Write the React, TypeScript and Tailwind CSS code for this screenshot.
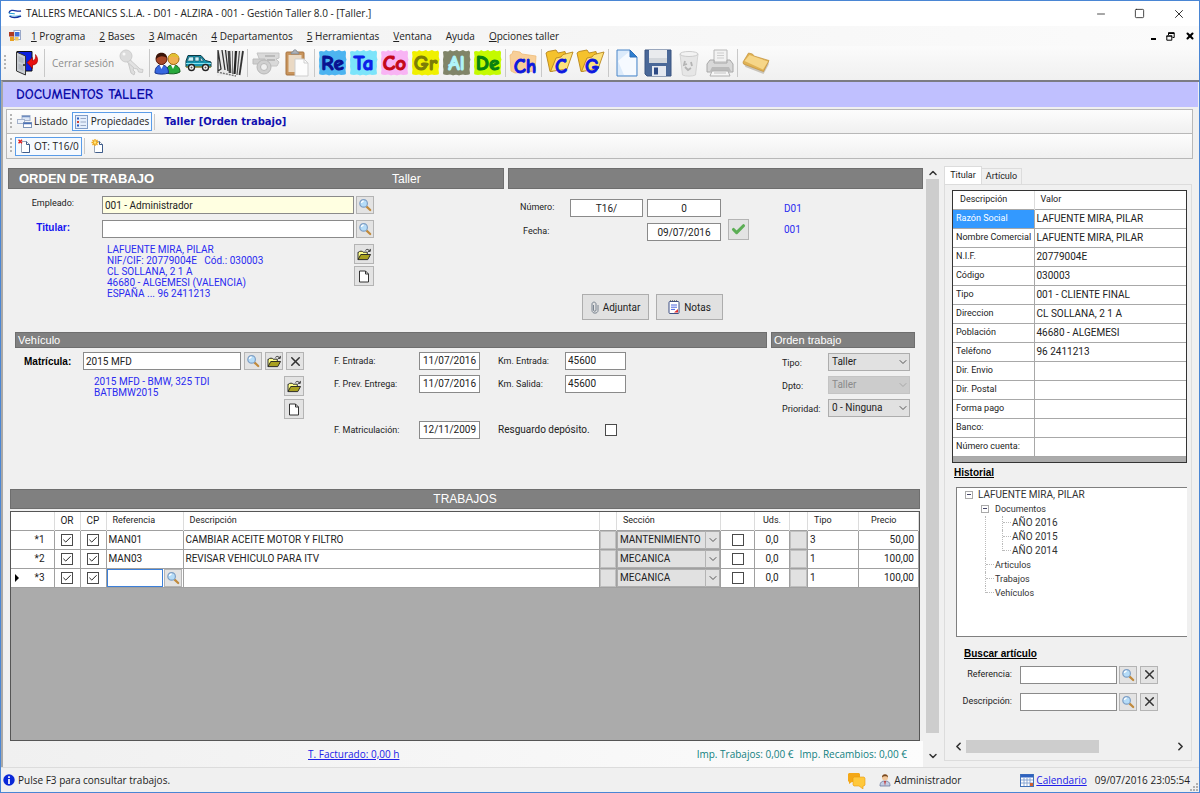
import type { ReactNode } from "react";
import { Check, ChevronDown, ChevronLeft, ChevronRight, ChevronUp, Minus, Square, X } from "lucide-react";

/* ---------- icons ---------- */

const Svg = ({ w, h, box, children }: { w: number; h: number; box: string; children: ReactNode }) => (
  <svg width={w} height={h} viewBox={box} fill="none" aria-hidden="true" className="shrink-0">
    {children}
  </svg>
);

const SearchIcon = () => (
  <Svg w={14} h={14} box="0 0 14 14">
    <path d="M8.6 8.6l3.6 3.4" stroke="#c08a3c" strokeWidth="2.2" strokeLinecap="round" />
    <circle cx="5.6" cy="5.4" r="3.8" fill="#b5dcf8" stroke="#7f9fc4" strokeWidth="1.2" />
    <path d="M3.4 5a2.4 2.4 0 012.2-2" stroke="#fff" strokeWidth="1.3" />
  </Svg>
);

const OpenIcon = () => (
  <Svg w={15} h={13} box="0 0 16 14">
    <path d="M1 12.5V4.5h1l1-1h2.5l1 1H11v2" fill="#ffff8a" stroke="#222" />
    <path d="M1 12.5l3-5.5h10.5l-3 5.500z" fill="#a8a020" stroke="#222" />
    <path d="M9 2.600c1.500-1.600 3.300-1.400 4.500.6M14.200 1v2.600h-2.500" stroke="#222" />
  </Svg>
);

const PageIcon = () => (
  <Svg w={12} h={13} box="0 0 12 13">
    <path d="M1.500 1h6l3 3v8h-9z" fill="#fff" stroke="#333" />
    <path d="M7.500 1v3h3" stroke="#333" />
  </Svg>
);

const AppIcon = () => (
  <Svg w={14} h={12} box="0 0 14 12">
    <path d="M1 4.800C1.500 2 5 2 8 2.800c2 .5 3.500.5 5 .2" stroke="#1432a0" strokeWidth="1.300" />
    <path d="M.8 5.200l6 .6" stroke="#1a9ad0" strokeWidth="1" />
    <path d="M1.500 8c2.500 2 7 1.800 11.500 0" stroke="#1432a0" strokeWidth="1.600" />
    <path d="M1.500 7.300C5 8.600 10 8 12.500 7" stroke="#5fc0e8" strokeWidth=".8" />
  </Svg>
);

const FormIcon = () => (
  <Svg w={12} h={12} box="0 0 12 12">
    <rect x="5" y=".5" width="6.500" height="9" fill="#fff" stroke="#9aa8c8" />
    <rect x="0" y="2" width="5" height="4.500" fill="#b03a20" />
    <rect x="6" y="2" width="4.500" height="4.500" fill="#3f6fd8" />
    <rect x="1" y="7" width="4" height="4" fill="#e8a020" />
    <rect x="6" y="7" width="3.500" height="3.500" fill="#f0c860" />
  </Svg>
);

const DoorIcon = () => (
  <Svg w={24} h={26} box="0 0 24 26">
    <path d="M2 1.500h15v19.500H3z" fill="#0a20e0" stroke="#111" />
    <path d="M1.500 2l9 4V25l-9-4z" fill="#c9cdd2" stroke="#333" />
    <path d="M3.500 6l5 2v5.500l-5-2zM3.500 13.500l5 2v5.500l-5-2z" fill="#b3b8bf" />
    <circle cx="9" cy="15" r="1" fill="#222" />
    <path d="M12 12.500l5.500-5v3c2.500 0 3.500-2.500 3-6 4 5 2 10.500-3 10.500v3.500z" fill="#e81010" stroke="#900" strokeWidth=".6" />
  </Svg>
);

const KeyIcon = () => (
  <Svg w={26} h={28} box="0 0 26 28">
    <path d="M9 9l4 15 3 2 1-3-2-2 1-2-2-2-2-9z" fill="#dedede" stroke="#c9c9c9" />
    <path d="M9 8l13 12 3 .5-.5 3-4-.5-1-3-3-.5-10-9z" fill="#e2e2e2" stroke="#cacaca" />
    <circle cx="8" cy="7" r="6" fill="#dcdcdc" stroke="#cdcdcd" />
    <circle cx="6" cy="5" r="1.500" fill="#f8f8f8" />
  </Svg>
);

const PeopleIcon = () => (
  <Svg w={27} h={24} box="0 0 27 24">
    <path d="M12 22c0-6 3-8 7-8s7 2 7 7c-3 2-9 2.500-14 1z" fill="#27a83b" stroke="#14601f" />
    <path d="M17 14l2 4 2-4z" fill="#fff" />
    <circle cx="19.500" cy="8" r="5.500" fill="#f0b050" stroke="#a06a14" />
    <path d="M14.500 7c0-5 10-6 10.500 0-3-1-7-3-10.500 0z" fill="#e0c030" />
    <path d="M1 22c0-6 3-8 6.500-8s7 2 7 8c-4 1.500-10 1.500-13.500 0z" fill="#3767e0" stroke="#163390" />
    <path d="M5.500 14l2 4 2-4z" fill="#fff" />
    <circle cx="7.500" cy="8" r="5.500" fill="#a8492a" stroke="#5a1c0c" />
    <path d="M2 8c-1-8 11-8 11-1-3-2-7-3-11 1z" fill="#3a1408" />
  </Svg>
);

const CarIcon = () => (
  <Svg w={27} h={18} box="0 0 27 18">
    <path d="M1 13V7l2-5.500h13L20.500 6.500l5.500 1.500v5z" fill="#1594b0" stroke="#0c3844" />
    <path d="M4 3h4.500v4H2.500zM10 3h4v4h-4zM15.500 3l3 4h-3z" fill="#c8f0f8" stroke="#0c3844" strokeWidth=".5" />
    <path d="M1 9.500h25" stroke="#8ae4f0" />
    <path d="M1 13h25" stroke="#c0a020" />
    <circle cx="6.500" cy="13.500" r="3" fill="#fff" stroke="#222" strokeWidth="1.400" />
    <circle cx="6.500" cy="13.500" r="1" fill="#555" />
    <circle cx="20.500" cy="13.500" r="3" fill="#fff" stroke="#222" strokeWidth="1.400" />
    <circle cx="20.500" cy="13.500" r="1" fill="#555" />
  </Svg>
);

const BarcodeIcon = () => (
  <Svg w={28} h={28} box="0 0 28 28">
    <path d="M2 1l26 1-3 22L1 27z" fill="#e9e9e9" />
    <path d="M2 1l3 19-3 2zM6 1l3 20M9.500 1l2.500 21" stroke="#333" strokeWidth="1.300" />
    <path d="M13 2l1 22" stroke="#444" strokeWidth="2.600" />
    <path d="M16.500 2v23" stroke="#777" />
    <path d="M20 2l-1.500 23" stroke="#222" strokeWidth="2.200" />
    <path d="M23.500 2L21 26" stroke="#555" strokeWidth="1.200" />
    <path d="M27 2l-3.500 24" stroke="#333" strokeWidth="1.800" />
    <path d="M1 23l19 4" stroke="#777" strokeWidth="1.400" strokeDasharray="2 1" />
  </Svg>
);

const EngineIcon = () => (
  <Svg w={28} h={26} box="0 0 28 26">
    <path d="M5 3h22v5l-3 1 3 3-2 4H10z" fill="#d9d9d9" stroke="#c4c4c4" />
    <path d="M1 9h12v5H1z" fill="#cfcfcf" stroke="#bcbcbc" />
    <path d="M13 6h10M15 10h8" stroke="#b0b0b0" strokeWidth="1.500" />
    <circle cx="12" cy="17" r="7" fill="#d0d0d0" stroke="#b8b8b8" />
    <circle cx="12" cy="17" r="3.500" fill="#efefef" stroke="#b8b8b8" />
  </Svg>
);

const ClipboardIcon = () => (
  <Svg w={24} h={28} box="0 0 24 28">
    <rect x="1" y="3" width="18" height="23" rx="1" fill="#c8945c" stroke="#a87440" />
    <rect x="3.500" y="6" width="13" height="17" fill="#ead9c4" />
    <path d="M6 5c0-2 1-2 2-2 0-3 4-3 4 0 1 0 2 0 2 2z" fill="#aab0b8" stroke="#7c828a" strokeWidth=".7" />
    <path d="M10 10h9l4 4v13H10z" fill="#fdfdfd" stroke="#cfcfcf" />
    <path d="M19 10v4h4" stroke="#cfcfcf" />
  </Svg>
);

const Badge = ({ text, bg, fg }: { text: string; bg: string; fg: string }) => (
  <Svg w={29} h={28} box="0 0 29 28">
    <path d="M1.500 2.500h26v23h-26z" fill={bg} />
    <path
      d="M1 3l2-1 3 1 2-2 3 1.500 4-1.500 2 1.500 4-1.500 3 1.500 3-1 1 2-.5 4 1 3-1 3 .5 4-1 3 1 4-2 1-3 .5-2-1-4 1.500-3-1-3 1-3-1.500-3 1-2-.5-2-1 1-4-1-3 .5-3-.5-4 1-3z"
      fill={bg}
    />
    <text x="14.500" y="21" textAnchor="middle" fill={fg} stroke={fg} strokeWidth="1.100" className="text-[21px] font-bold [font-family:'Comic_Neue','Comic_Sans_MS',cursive]">
      {text}
    </text>
  </Svg>
);

const FolderLetter = ({ text, soft }: { text: string; soft?: boolean }) => (
  <Svg w={29} h={28} box="0 0 29 28">
    {soft ? (
      <path d="M1 6l2-1 1-3 7 1 2 2 14 2-1 15-20 2-4-2z" fill="#f8cf98" stroke="#eebb78" strokeWidth=".8" />
    ) : (
      <>
        <path d="M1 4l2-1.500L11 1l2 3 7-1.500 1 4L8 22l-3 .5z" fill="#f5c22c" stroke="#b8861c" strokeWidth=".9" />
        <path d="M5.500 22.500L11 9l5-1 2-2.500L28 3l-6 17z" fill="#fde27c" stroke="#b8861c" strokeWidth=".9" />
      </>
    )}
    <text x="16" y="24" textAnchor="middle" fill="#0c18e0" stroke="#0c18e0" strokeWidth=".9" className="text-[20px] font-bold [font-family:'Comic_Neue','Comic_Sans_MS',cursive]">
      {text}
    </text>
  </Svg>
);

const NewIcon = () => (
  <Svg w={22} h={28} box="0 0 22 28">
    <path d="M1 1h13l7 7v19H1z" fill="#dcebfb" stroke="#4a86c8" />
    <path d="M2 12L14 2v6h6v18H8z" fill="#f6faff" />
    <path d="M14 1v7h7z" fill="#2f7fd0" stroke="#2f6fb8" />
  </Svg>
);

const SaveIcon = () => (
  <Svg w={28} h={28} box="0 0 28 28">
    <path d="M1 1h26v26H3l-2-2z" fill="#4a6898" stroke="#3a5580" />
    <path d="M5 1h18v13H5z" fill="#e9ebee" />
    <path d="M5 9h18v5H5z" fill="#d3d7dc" />
    <path d="M8 17h14v10H8z" fill="#e4e8f0" />
    <path d="M10 18.500h4v7h-4z" fill="#2d4a84" />
  </Svg>
);

const TrashIcon = () => (
  <Svg w={20} h={27} box="0 0 20 27">
    <path d="M1 4l2.500 21c3 1.500 10 1.500 13 0L19 4z" fill="#e6e6e6" stroke="#d4d4d4" />
    <ellipse cx="10" cy="4" rx="9" ry="2.500" fill="#f3f3f3" stroke="#cccccc" />
    <path d="M6 11l-1 4 3-1M6 17l3 3 3-2M12 12l1 4" stroke="#b4b4b4" strokeWidth="1.800" />
  </Svg>
);

const PrinterIcon = () => (
  <Svg w={28} h={28} box="0 0 28 28">
    <path d="M8 1h13v12H8z" fill="#f2f2f2" stroke="#b8b8b8" />
    <path d="M11 4h7M11 6.500h7M11 9h7" stroke="#cecece" />
    <path d="M4 11h4v3h13v-3h3l3 4v8H1v-8z" fill="#d8d8d8" stroke="#a8a8a8" />
    <path d="M6 18h17l2 4H4z" fill="#bababa" />
    <path d="M6 22h16l2 5H4z" fill="#f6f6f6" stroke="#b0b0b0" />
    <path d="M8 24h12" stroke="#c4c4c4" />
  </Svg>
);

const FolderIcon = () => (
  <Svg w={28} h={24} box="0 0 28 24">
    <path d="M1.500 12l2 4 18 7 5-9 .5-4z" fill="#c9c4ba" />
    <path d="M1 11l5.500-9 4 1 1.500 2 15 4.500-5.500 11L1.500 13z" fill="#e0b254" stroke="#c4923a" strokeWidth=".7" />
    <path d="M2.500 10l5-6 18.500 6.500-5 8z" fill="#f6d688" />
  </Svg>
);

const ListIcon = () => (
  <Svg w={15} h={13} box="0 0 15 13">
    <rect x="5" y=".5" width="8" height="5" fill="#dce6f6" stroke="#a4b2cc" />
    <path d="M5 1.500h8" stroke="#6f8cc0" strokeWidth="1.500" />
    <rect x=".5" y="4.500" width="7" height="4" fill="#eef3fb" stroke="#a4b2cc" />
    <rect x="6.500" y="7.500" width="8" height="5" fill="#fff" stroke="#7f95b8" />
    <path d="M6.500 8.500h8" stroke="#4a70b8" strokeWidth="1.500" />
  </Svg>
);

const PropsIcon = () => (
  <Svg w={13} h={14} box="0 0 13 14">
    <rect x=".5" y=".5" width="12" height="13" fill="#e4eefc" stroke="#7f9cc8" />
    <rect x="2" y="2.500" width="2" height="2" fill="#2c5cc0" />
    <rect x="2" y="6" width="2" height="2" fill="#d04030" />
    <rect x="2" y="9.500" width="2" height="2" fill="#2c5cc0" />
    <path d="M5.500 3.500H11M5.500 7H11M5.500 10.500H11" stroke="#99a8c4" />
  </Svg>
);

const DocMark = ({ star }: { star?: boolean }) => (
  <Svg w={13} h={14} box="0 0 13 14">
    <path d="M3.500 2.500h5l3 3v8h-8z" fill="#fff" stroke="#9aa6b8" />
    <path d="M8.500 2.500v3h3v8h-7" stroke="#3f5d8c" />
    {star ? (
      <>
        <path d="M4 0v7M.5 3.500h7M1.500 1l5 5M6.500 1l-5 5" stroke="#f0a818" strokeWidth="1.300" />
        <circle cx="4" cy="3.500" r="1.300" fill="#ffe880" />
      </>
    ) : (
      <path d="M.5.8l3.500 3.500M4 .8L.5 4.300" stroke="#e02020" strokeWidth="1.500" />
    )}
  </Svg>
);

const ClipIcon = () => (
  <Svg w={8} h={13} box="0 0 8 13">
    <path d="M2.500 4v5c0 1.800 2.500 1.800 2.500 0V3c0-2.500-4-2.500-4 0v6.500c0 3.500 6 3.500 6 0V4" stroke="#7a8490" strokeWidth="1" />
  </Svg>
);

const NoteIcon = () => (
  <Svg w={12} h={14} box="0 0 12 14">
    <rect x="1" y="1.500" width="10" height="12" rx="1" fill="#fff" stroke="#3c4f84" />
    <path d="M2 .8h8" stroke="#555" strokeDasharray="1 1" />
    <path d="M3 5h6M3 7.200h6M3 9.400h4" stroke="#4a64e0" />
    <path d="M6 12.500l4-3.500v3.500z" fill="#e03030" />
  </Svg>
);

const InfoIcon = () => (
  <Svg w={12} h={12} box="0 0 12 12">
    <circle cx="6" cy="6" r="5.700" fill="#0a28d8" />
    <path d="M6 2.200v1.800M6 5v5" stroke="#fff" strokeWidth="1.700" />
  </Svg>
);

const ChatIcon = () => (
  <Svg w={19} h={17} box="0 0 19 17">
    <path d="M2 1h10l1 1v7l-1 1H5l-3 2V10L1 9V2z" fill="#f4a818" />
    <path d="M7 5h10l1 1v7l-1 1h-1v3l-4-3H7l-1-1V6z" fill="#ffc83c" stroke="#e89a10" strokeWidth=".6" />
  </Svg>
);

const UserIcon = () => (
  <Svg w={12} h={14} box="0 0 12 14">
    <path d="M1 13c0-4 2-5 5-5s5 1 5 5z" fill="#c2cde4" stroke="#6d7a9c" strokeWidth=".8" />
    <path d="M5 8h2l-1 5z" fill="#c04040" />
    <circle cx="6" cy="4.500" r="3" fill="#f2c79a" />
    <path d="M3 4.500C2.500 0 9.500 0 9 4.500 8 3 5 2.500 3 4.500z" fill="#7a4a20" />
  </Svg>
);

const CalendarIcon = () => (
  <Svg w={14} h={13} box="0 0 14 13">
    <rect x=".5" y=".5" width="13" height="12" fill="#fff" stroke="#4070b8" />
    <path d="M1 2h12" stroke="#2f62c0" strokeWidth="3" />
    <path d="M1 6h12M1 9h12M4 4v8M7 4v8M10 4v8" stroke="#7f9fd0" strokeWidth=".9" />
    <rect x="10" y="9" width="3" height="3" fill="#d06030" />
  </Svg>
);

const RestoreIcon = () => (
  <Svg w={9} h={9} box="0 0 9 9">
    <path d="M2.500 3V.8h5.700v4.700H6.500" stroke="#000" />
    <path d="M2.200 1.200h6M.5 4h5.700" stroke="#000" strokeWidth="1.400" />
    <path d="M.8 4v4.200h5V4" stroke="#000" />
  </Svg>
);

/* ---------- small controls ---------- */

const IconButton = ({ label, big, children }: { label: string; big?: boolean; children: ReactNode }) => (
  <button
    type="button"
    aria-label={label}
    className={`flex shrink-0 items-center justify-center border border-[#b4b4b4] bg-[#e3e3e3] text-[#333] ${big ? "h-5 w-5" : "h-[18px] w-[18px]"}`}
  >
    {children}
  </button>
);

const TextBox = ({ id, label, value = "", className = "" }: { id: string; label?: string; value?: string; className?: string }) => (
  <input
    id={id}
    aria-label={label}
    defaultValue={value}
    className={`h-[18px] min-w-0 border border-[#8a8a8a] px-[2px] text-[10px] text-[#222] outline-none ${className}`}
  />
);

const Picker = ({ id, label, value, disabled, cell }: { id: string; label?: string; value: string; disabled?: boolean; cell?: boolean }) => (
  <div className="grid w-full items-center">
    <select
      id={id}
      aria-label={label}
      disabled={disabled}
      className={`col-start-1 row-start-1 h-[18px] w-full appearance-none border text-[10px] leading-4 opacity-100 outline-none ${cell ? "border-[#a8a8a8] pl-[2px]" : "pl-[3px]"} ${disabled ? "border-[#c4c4c4] bg-[#cccccc] text-[#8a8a8a]" : "border-[#adadad] bg-[#e1e1e1] text-[#222]"}`}
    >
      <option>{value}</option>
    </select>
    <span
      className={`pointer-events-none col-start-1 row-start-1 flex h-[18px] w-[15px] items-center justify-center justify-self-end ${cell ? "border-l border-[#b4b4b4]" : ""} ${disabled ? "text-[#a8a8a8]" : "text-[#555]"}`}
    >
      <ChevronDown size={12} strokeWidth={2} />
    </span>
  </div>
);

const Tick = ({ label, checked, id }: { label?: string; checked?: boolean; id?: string }) => (
  <span className="inline-grid h-3 w-3 place-items-center align-middle">
    <input
      id={id}
      type="checkbox"
      aria-label={label}
      defaultChecked={checked}
      className="peer col-start-1 row-start-1 h-3 w-3 appearance-none border border-[#4a4a4a] bg-white"
    />
    <Check size={10} strokeWidth={2.4} className="pointer-events-none invisible col-start-1 row-start-1 text-[#222] peer-checked:visible" />
  </span>
);

const Sep = () => (
  <span className="flex w-[5px] shrink-0 justify-center">
    <span className="h-7 w-px bg-[#c8c8c8]" />
  </span>
);

const Grip = () => <span className="h-4 w-[2px] shrink-0 bg-[repeating-linear-gradient(to_bottom,#b4b4b4_0_2px,transparent_2px_4px)]" />;

const Tool = ({ label, children }: { label: string; children: ReactNode }) => (
  <button type="button" aria-label={label} className="flex h-8 w-[31px] shrink-0 items-center justify-center">
    {children}
  </button>
);

/* ---------- window chrome ---------- */

const menus: [string, string][] = [
  ["1", " Programa"],
  ["2", " Bases"],
  ["3", " Almacén"],
  ["4", " Departamentos"],
  ["5", " Herramientas"],
  ["V", "entana"],
  ["", "Ayuda"],
  ["O", "pciones taller"],
];

const TitleBar = () => (
  <header className="flex h-[25px] items-center bg-white pl-[7px] pr-[13px]">
    <AppIcon />
    <h1 className="ml-1 flex-1 text-[10px] text-[#222]">TALLERS MECANICS S.L.A. - D01 - ALZIRA - 001 - Gestión Taller 8.0 - [Taller.]</h1>
    <div className="flex gap-[27px] text-[#222]">
      <button type="button" aria-label="Minimizar"><Minus size={12} strokeWidth={1.6} /></button>
      <button type="button" aria-label="Maximizar"><Square size={11} strokeWidth={1.8} /></button>
      <button type="button" aria-label="Cerrar"><X size={14} strokeWidth={1.6} /></button>
    </div>
  </header>
);

const MenuBar = () => (
  <nav className="flex h-5 items-center bg-gradient-to-r from-[#f1f1f1] to-[#fbfbfb] pl-2 pr-1 text-[10px] text-[#222]">
    <FormIcon />
    <div className="ml-[3px] flex flex-1">
      {menus.map(([key, rest]) => (
        <button key={rest} type="button" className="whitespace-pre px-[7px]">
          <u>{key}</u>{rest}
        </button>
      ))}
    </div>
    <div className="flex items-center gap-[10px] text-black">
      <button type="button" aria-label="Minimizar documento" className="flex h-2 items-end"><span className="h-[2px] w-[5px] bg-black" /></button>
      <button type="button" aria-label="Restaurar documento"><RestoreIcon /></button>
      <button type="button" aria-label="Cerrar documento"><X size={10} strokeWidth={5} /></button>
    </div>
  </nav>
);

const Toolbar = () => (
  <div className="flex h-[34px] items-center bg-gradient-to-b from-[#fbfbfb] to-[#f0f0f0] pl-[3px]">
    <Grip />
    <span className="w-[5px]" />
    <Tool label="Salir"><DoorIcon /></Tool>
    <Sep />
    <button type="button" className="flex w-[100px] shrink-0 items-center justify-between pl-[5px] pr-[3px] text-[10px] text-[#8c8c8c]">
      Cerrar sesión <KeyIcon />
    </button>
    <Sep />
    <Tool label="Clientes"><PeopleIcon /></Tool>
    <Tool label="Vehículos"><CarIcon /></Tool>
    <Tool label="Artículos"><BarcodeIcon /></Tool>
    <Sep />
    <Tool label="Taller"><EngineIcon /></Tool>
    <Tool label="Pegar"><ClipboardIcon /></Tool>
    <Sep />
    <Tool label="Recambios"><Badge text="Re" bg="#4db4f0" fg="#081090" /></Tool>
    <Tool label="Taller"><Badge text="Ta" bg="#7ce4fa" fg="#0c20e8" /></Tool>
    <Tool label="Compras"><Badge text="Co" bg="#f8b4f4" fg="#c40818" /></Tool>
    <Tool label="Grúas"><Badge text="Gr" bg="#f0f000" fg="#7c7c08" /></Tool>
    <Tool label="Alquiler"><Badge text="Al" bg="#808468" fg="#b0f4fa" /></Tool>
    <Tool label="Desguace"><Badge text="De" bg="#c4fa00" fg="#088010" /></Tool>
    <Sep />
    <Tool label="Chapa"><FolderLetter text="Ch" soft /></Tool>
    <Sep />
    <Tool label="Carpeta C"><FolderLetter text="C" /></Tool>
    <Tool label="Carpeta G"><FolderLetter text="G" /></Tool>
    <Sep />
    <Tool label="Nuevo"><NewIcon /></Tool>
    <Tool label="Guardar"><SaveIcon /></Tool>
    <Tool label="Eliminar"><TrashIcon /></Tool>
    <Tool label="Imprimir"><PrinterIcon /></Tool>
    <Sep />
    <Tool label="Abrir carpeta"><FolderIcon /></Tool>
  </div>
);

const SubBars = () => (
  <div className="ml-[3px] mr-[5px] mt-[2px] border border-[#b8b8b8] text-[10px] text-[#222]">
    <div className="flex h-6 items-center border-b border-[#b8b8b8] bg-gradient-to-b from-[#fdfdfd] to-[#f0f0f0] pl-[3px]">
      <Grip />
      <button type="button" className="ml-[5px] flex items-center gap-[2px]"><ListIcon /> Listado</button>
      <button type="button" className="ml-1 flex h-[19px] items-center gap-[3px] border border-[#5a9ce8] bg-[#f6faff] px-[2px]"><PropsIcon /> Propiedades</button>
      <span className="ml-[2px] h-4 w-px bg-[#c8c8c8]" />
      <h2 className="ml-[9px] font-['DejaVu_Sans',sans-serif] text-[10px] font-bold text-[#1010b0]">Taller [Orden trabajo]</h2>
    </div>
    <div className="flex h-6 items-center bg-gradient-to-b from-[#fdfdfd] to-[#f0f0f0] pl-[3px]">
      <Grip />
      <button type="button" className="ml-[3px] flex h-[19px] items-center gap-[3px] border border-[#5a9ce8] bg-[#f6faff] px-[2px]"><DocMark /> OT: T16/0</button>
      <span className="ml-[2px] h-4 w-px bg-[#c8c8c8]" />
      <button type="button" aria-label="Nueva orden" className="ml-[6px]"><DocMark star /></button>
    </div>
  </div>
);

/* ---------- order form ---------- */

const OrderHeader = () => (
  <section className="flex gap-1 pl-[5px]">
    <div className="flex-[496]">
      <div className="flex h-[21px] items-center border border-[#6e6e6e] bg-[#808080] pl-[10px] font-['Liberation_Sans',sans-serif] text-white">
        <h3 className="w-[373px] text-[13px] font-bold">ORDEN DE TRABAJO</h3>
        <span className="text-[12px]">Taller</span>
      </div>
      <div className="flex flex-col gap-[6px] pr-[130px] pt-[7px]">
        <div className="flex items-start">
          <label htmlFor="empleado" className="w-[66px] pt-[1px] text-right text-[9px]">Empleado:</label>
          <TextBox id="empleado" value="001 - Administrador" className="ml-7 mr-[2px] flex-1 bg-[#ffffe1]" />
          <IconButton label="Buscar empleado"><SearchIcon /></IconButton>
        </div>
        <div className="flex items-start">
          <label htmlFor="titular" className="w-[62px] text-right font-['Liberation_Sans',sans-serif] text-[10px] font-bold text-[#1414f0]">Titular:</label>
          <TextBox id="titular" className="ml-8 mr-[2px] flex-1 bg-white" />
          <IconButton label="Buscar titular"><SearchIcon /></IconButton>
        </div>
        <div className="flex justify-between pl-[99px]">
          <address className="text-[10px] not-italic leading-[11px] text-[#2a2af0]">
            LAFUENTE MIRA, PILAR<br />
            NIF/CIF: 20779004E &nbsp; Cód.: 030003<br />
            CL SOLLANA, 2 1 A<br />
            46680 - ALGEMESI (VALENCIA)<br />
            ESPAÑA ... 96 2411213
          </address>
          <div className="flex flex-col gap-[2px]">
            <IconButton label="Abrir titular" big><OpenIcon /></IconButton>
            <IconButton label="Nuevo titular" big><PageIcon /></IconButton>
          </div>
        </div>
      </div>
    </div>
    <div className="flex-[415]">
      <div className="h-[21px] border border-[#6e6e6e] bg-[#808080]" />
      <div className="pl-[12px] pt-[10px] text-[9px]">
        <div className="flex items-center">
          <label htmlFor="serie" className="w-[50px]">Número:</label>
          <TextBox id="serie" value="T16/" className="w-[73px] bg-white text-center" />
          <TextBox id="numero" label="Número de documento" value="0" className="ml-1 w-[74px] bg-white text-center" />
          <span className="ml-[63px] text-[10px] text-[#2a2af0]">D01</span>
        </div>
        <div className="mt-px flex items-center">
          <label htmlFor="fecha" className="w-[127px] pl-[3px] pt-[5px]">Fecha:</label>
          <TextBox id="fecha" value="09/07/2016" className="mt-[5px] w-[74px] bg-white text-center" />
          <button type="button" aria-label="Confirmar" className="ml-[7px] flex h-[21px] w-[21px] items-center justify-center border border-[#b4b4b4] bg-[#e3e3e3]">
            <Check size={15} strokeWidth={5} className="text-[#5cae55]" />
          </button>
          <span className="ml-[35px] text-[10px] text-[#2a2af0]">001</span>
        </div>
      </div>
      <div className="mt-[53px] flex gap-[7px] pl-[74px] text-[10px]">
        <button type="button" className="flex h-[26px] w-[67px] items-center justify-center gap-1 border border-[#adadad] bg-[#e1e1e1]"><ClipIcon /> Adjuntar</button>
        <button type="button" className="flex h-[26px] w-[67px] items-center justify-center gap-1 border border-[#adadad] bg-[#e1e1e1]"><NoteIcon /> Notas</button>
      </div>
    </div>
  </section>
);

const BandTitle = ({ children }: { children: ReactNode }) => (
  <h3 className="flex h-4 items-center border border-[#6e6e6e] bg-[#808080] pl-[2px] font-['Liberation_Sans',sans-serif] text-[11px] text-white">{children}</h3>
);

const Vehicle = () => (
  <section className="mt-3 flex gap-1 pl-3 pr-2">
    <div className="flex-[752]">
      <BandTitle>Vehículo</BandTitle>
      <div className="flex pl-[9px] pt-[4px]">
        <div className="w-[280px]">
          <div className="flex items-center">
            <label htmlFor="matricula" className="w-[59px] font-['Liberation_Sans',sans-serif] text-[10px] font-bold text-black">Matrícula:</label>
            <TextBox id="matricula" value="2015 MFD" className="flex-1 bg-white" />
            <div className="ml-[3px] flex gap-[3px]">
              <IconButton label="Buscar vehículo"><SearchIcon /></IconButton>
              <IconButton label="Abrir vehículo"><OpenIcon /></IconButton>
              <IconButton label="Quitar vehículo"><X size={15} strokeWidth={2.4} /></IconButton>
            </div>
          </div>
          <div className="mt-[6px] flex justify-between pl-[70px]">
            <p className="text-[10px] leading-[11px] text-[#2a2af0]">2015 MFD - BMW, 325 TDI<br />BATBMW2015</p>
            <div className="flex flex-col gap-[3px]">
              <IconButton label="Abrir ficha" big><OpenIcon /></IconButton>
              <IconButton label="Nueva ficha" big><PageIcon /></IconButton>
            </div>
          </div>
        </div>
        <div className="ml-[30px] grid auto-rows-[23px] grid-cols-[85px_61px] items-start text-[9px] leading-[18px]">
          <label htmlFor="entrada">F. Entrada:</label>
          <TextBox id="entrada" value="11/07/2016" className="bg-white text-center" />
          <label htmlFor="entrega">F. Prev. Entrega:</label>
          <TextBox id="entrega" value="11/07/2016" className="bg-white text-center" />
          <label htmlFor="matriculacion" className="row-start-4">F. Matriculación:</label>
          <TextBox id="matriculacion" value="12/11/2009" className="row-start-4 bg-white text-center" />
        </div>
        <div className="ml-[18px] grid auto-rows-[23px] grid-cols-[67px_61px] items-start text-[9px] leading-[18px]">
          <label htmlFor="km-entrada">Km. Entrada:</label>
          <TextBox id="km-entrada" value="45600" className="bg-white" />
          <label htmlFor="km-salida">Km. Salida:</label>
          <TextBox id="km-salida" value="45600" className="bg-white" />
          <div className="col-span-2 row-start-4 flex h-[18px] items-center gap-[15px]">
            <label htmlFor="resguardo" className="text-[10px]">Resguardo depósito.</label>
            <Tick id="resguardo" />
          </div>
        </div>
      </div>
    </div>
    <div className="flex-[144]">
      <BandTitle>Orden trabajo</BandTitle>
      <div className="grid auto-rows-[23px] grid-cols-[46px_1fr] items-start pl-[11px] pr-[5px] pt-[5px] text-[9px] leading-[20px]">
        <label htmlFor="tipo">Tipo:</label>
        <Picker id="tipo" value="Taller" />
        <label htmlFor="dpto">Dpto:</label>
        <Picker id="dpto" value="Taller" disabled />
        <label htmlFor="prioridad">Prioridad:</label>
        <Picker id="prioridad" value="0 - Ninguna" />
      </div>
    </div>
  </section>
);

/* ---------- jobs grid ---------- */

const jobs = [
  { n: 1, ref: "MAN01", text: "CAMBIAR ACEITE MOTOR Y FILTRO", section: "MANTENIMIENTO", type: "3", price: "50,00" },
  { n: 2, ref: "MAN03", text: "REVISAR VEHICULO PARA ITV", section: "MECANICA", type: "1", price: "100,00" },
  { n: 3, ref: "", text: "", section: "MECANICA", type: "1", price: "100,00" },
];

const Jobs = () => (
  <section className="mt-auto flex h-[252px] flex-col pl-[7px] pr-[3px]">
    <h3 className="flex h-5 items-center justify-center border border-[#6e6e6e] bg-[#808080] font-['Liberation_Sans',sans-serif] text-[12px] text-white">TRABAJOS</h3>
    <div className="mt-[2px] flex-1 border border-[#555] bg-[#ababab]">
      <table className="w-full table-fixed border-collapse bg-white text-[10px] text-[#222]">
        <colgroup>
          <col className="w-[43px]" />
          <col className="w-[26px]" />
          <col className="w-[26px]" />
          <col className="w-[77px]" />
          <col />
          <col className="w-[17px]" />
          <col className="w-[104px]" />
          <col className="w-[34px]" />
          <col className="w-[35px]" />
          <col className="w-[18px]" />
          <col className="w-[51px]" />
          <col className="w-[60px]" />
        </colgroup>
        <thead>
          <tr className="h-[18px] text-left text-[9px] [&>th]:border-r [&>th]:border-[#dcdcdc] [&>th]:font-normal">
            <th aria-label="Línea" />
            <th className="text-center text-[10px]">OR</th>
            <th className="text-center text-[10px]">CP</th>
            <th className="pl-[6px]">Referencia</th>
            <th className="pl-[6px]">Descripción</th>
            <th aria-label="Ampliar" />
            <th className="pl-[6px]">Sección</th>
            <th aria-label="Marca" />
            <th className="pl-[8px]">Uds.</th>
            <th aria-label="Detalle" />
            <th className="pl-[6px]">Tipo</th>
            <th className="pl-[12px]">Precio</th>
          </tr>
        </thead>
        <tbody>
          {jobs.map((job) => (
            <tr key={job.n} className="h-[19px] border-y border-[#a0a0a0] [&>td]:border-r [&>td]:border-[#a0a0a0] [&>td]:p-0">
              <td>
                <span className="flex items-center justify-between pl-[4px] pr-[9px]">
                  {job.n === 3 ? <span className="h-0 w-0 border-y-4 border-l-4 border-y-transparent border-l-black" /> : <span />}
                  *{job.n}
                </span>
              </td>
              <td><span className="flex justify-center"><Tick label="OR" checked /></span></td>
              <td><span className="flex justify-center"><Tick label="CP" checked /></span></td>
              <td>
                {job.ref ? (
                  <span className="pl-[2px]">{job.ref}</span>
                ) : (
                  <span className="flex gap-px">
                    <input aria-label="Referencia del trabajo" className="h-[18px] w-[56px] border border-[#3c7fd8] bg-white outline-none" />
                    <IconButton label="Buscar referencia"><SearchIcon /></IconButton>
                  </span>
                )}
              </td>
              <td><span className="pl-[2px]">{job.text}</span></td>
              <td><button type="button" aria-label="Ampliar descripción" className="block h-[18px] w-full border border-[#c0c0c0] bg-[#e1e1e1]" /></td>
              <td><Picker id={`seccion-${job.n}`} label="Sección" value={job.section} cell /></td>
              <td><span className="flex justify-center"><Tick label="Marca" /></span></td>
              <td className="text-center">0,0</td>
              <td><button type="button" aria-label="Detalle" className="block h-[18px] w-full border border-[#c0c0c0] bg-[#e1e1e1]" /></td>
              <td><span className="pl-[2px]">{job.type}</span></td>
              <td className="text-right"><span className="pr-[4px]">{job.price}</span></td>
            </tr>
          ))}
        </tbody>
      </table>
    </div>
  </section>
);

/* ---------- right side ---------- */

const details: [string, string][] = [
  ["Razón Social", "LAFUENTE MIRA, PILAR"],
  ["Nombre Comercial", "LAFUENTE MIRA, PILAR"],
  ["N.I.F.", "20779004E"],
  ["Código", "030003"],
  ["Tipo", "001 - CLIENTE FINAL"],
  ["Direccion", "CL SOLLANA, 2 1 A"],
  ["Población", "46680 - ALGEMESI"],
  ["Teléfono", "96 2411213"],
  ["Dir. Envio", ""],
  ["Dir. Postal", ""],
  ["Forma pago", ""],
  ["Banco:", ""],
  ["Número cuenta:", ""],
];

const Leaf = ({ last, children }: { last?: boolean; children: ReactNode }) => (
  <li className="flex gap-px">
    <span className={`w-[9px] border-l border-dotted border-[#bbb] ${last ? "h-[7px]" : "h-[14px]"}`}>
      <span className="block h-[7px] border-b border-dotted border-[#bbb]" />
    </span>
    {children}
  </li>
);

const Expander = () => (
  <span className="flex h-[8px] w-[8px] items-center justify-center border border-[#aaa] bg-white"><span className="h-px w-1 bg-[#446]" /></span>
);

const FinderRow = ({ id, label }: { id: string; label: string }) => (
  <div className="flex items-center">
    <label htmlFor={id} className="w-[60px] pr-[8px] text-right text-[9px]">{label}</label>
    <TextBox id={id} className="w-[97px] bg-white" />
    <div className="ml-[2px] flex gap-[3px]">
      <IconButton label={`Buscar ${label}`}><SearchIcon /></IconButton>
      <IconButton label={`Borrar ${label}`}><X size={15} strokeWidth={2.4} /></IconButton>
    </div>
  </div>
);

const SidePanel = () => (
  <aside className="mr-[6px] flex w-[248px] shrink-0 flex-col pb-[6px] pt-[7px]">
    <div role="tablist" className="flex items-end text-[9px]">
      <button type="button" role="tab" aria-selected="true" className="h-[18px] w-[38px] border border-b-0 border-[#dcdcdc] bg-white">Titular</button>
      <button type="button" role="tab" aria-selected="false" className="h-[16px] w-[40px] border border-b-0 border-l-0 border-[#dcdcdc] bg-[#f0f0f0]">Artículo</button>
    </div>
    <div className="flex flex-1 flex-col border border-[#dcdcdc] bg-[#f0f0f0] pl-[7px] pr-[4px] pt-[5px]">
      <div className="border border-[#333] bg-[#ababab] pb-[5px]">
        <table className="w-full table-fixed border-collapse bg-white text-[10px]">
          <colgroup>
            <col className="w-[81px]" />
            <col />
          </colgroup>
          <thead>
            <tr className="h-[18px] text-left text-[9px] [&>th]:font-normal">
              <th className="border-r border-[#dcdcdc] pl-[7px]">Descripción</th>
              <th className="pl-[6px]">Valor</th>
            </tr>
          </thead>
          <tbody>
            {details.map(([name, value], i) => (
              <tr key={name} className="h-[19px] border-y border-[#a8a8a8]">
                <td className={`border-r border-[#a8a8a8] p-0 pl-[3px] text-[9px] ${i === 0 ? "bg-[#3399ff] text-white" : "text-[#222]"}`}>{name}</td>
                <td className="p-0 pl-[2px] text-[#222]">{value}</td>
              </tr>
            ))}
          </tbody>
        </table>
      </div>
      <h3 className="mt-[2px] pl-[2px] font-['Liberation_Sans',sans-serif] text-[10px] font-bold text-black underline">Historial</h3>
      <div className="ml-1 mt-[7px] h-[150px] border border-r-0 border-[#7f7f7f] bg-white pl-2 text-[10px] leading-[14px] text-[#333]">
        <div className="flex items-center gap-[5px]"><Expander /> LAFUENTE MIRA, PILAR</div>
        <div className="pl-4">
          <div className="flex items-center gap-[6px] text-[9px]"><Expander /> Documentos</div>
          <ul className="ml-1 border-l border-dotted border-[#bbb] pl-4">
            <Leaf>AÑO 2016</Leaf>
            <Leaf>AÑO 2015</Leaf>
            <Leaf last>AÑO 2014</Leaf>
          </ul>
          <ul className="pl-1 text-[9px]">
            <Leaf>Articulos</Leaf>
            <Leaf>Trabajos</Leaf>
            <Leaf last>Vehículos</Leaf>
          </ul>
        </div>
      </div>
      <h3 className="mt-[9px] pl-[12px] font-['Liberation_Sans',sans-serif] text-[10px] font-bold text-black underline">Buscar artículo</h3>
      <div className="mt-[5px] flex flex-col gap-[9px] pl-[8px]">
        <FinderRow id="buscar-ref" label="Referencia:" />
        <FinderRow id="buscar-desc" label="Descripción:" />
      </div>
      <div className="mb-[7px] mt-auto flex h-[14px] items-center text-[#333]">
        <ChevronLeft size={13} strokeWidth={3} />
        <span className="ml-px h-[13px] w-[133px] bg-[#cdcdcd]" />
        <ChevronRight size={13} strokeWidth={3} className="ml-auto" />
      </div>
    </div>
  </aside>
);

const StatusBar = () => (
  <footer className="flex h-[25px] items-center border-t border-[#dcdcdc] bg-[#f0f0f0] pl-[2px] text-[10px] text-[#222]">
    <InfoIcon />
    <span className="ml-[3px] flex-1">Pulse F3 para consultar trabajos.</span>
    <ChatIcon />
    <span className="ml-[13px] flex w-[141px] items-center gap-[3px]"><UserIcon /> Administrador</span>
    <CalendarIcon />
    <a href="#calendario" className="ml-[2px] text-[#2020e8] underline">Calendario</a>
    <span className="ml-2">09/07/2016 23:05:54</span>
    <span className="self-end">
      <Svg w={9} h={9} box="0 0 9 9"><path d="M6 0h2v2H6zM3 3h2v2H3zM6 3h2v2H6zM0 6h2v2H0zM3 6h2v2H3zM6 6h2v2H6z" fill="#b0b0b0" /></Svg>
    </span>
  </footer>
);

export default function App() {
  return (
    <div className="flex min-h-screen flex-col border border-[#4a86d4] bg-[#f0f0f0] font-['Open_Sans','Noto_Sans',sans-serif]">
      <TitleBar />
      <MenuBar />
      <Toolbar />
      <div className="flex flex-1 flex-col border-l-2 border-t-2 border-l-[#a8a8a8] border-t-[#7c7c84] pr-px">
        <div className="flex h-[25px] items-center bg-[#c0c0ff] pl-[13px]">
          <h2 className="text-[14px] font-bold text-[#0c0ca8] [font-family:'Comic_Neue','Comic_Sans_MS',cursive]">DOCUMENTOS TALLER</h2>
        </div>
        <SubBars />
        <div className="flex flex-1 font-['Roboto','Liberation_Sans',sans-serif] text-[#222]">
          <main className="flex min-w-0 flex-1 flex-col pt-[9px]">
            <OrderHeader />
            <Vehicle />
            <Jobs />
            <div className="flex h-[26px] items-center justify-between bg-gradient-to-r from-[#f0f0f0] to-[#fcfcfc] pl-[305px] pr-[16px] font-['Open_Sans',sans-serif] text-[10px]">
              <a href="#facturado" className="text-[#2020e8] underline">T. Facturado: 0,00 h</a>
              <span className="flex gap-[6px] text-[#108080]">
                <span>Imp. Trabajos: 0,00 €</span>
                <span>Imp. Recambios: 0,00 €</span>
              </span>
            </div>
          </main>
          <div className="ml-[3px] mr-[5px] flex w-[13px] shrink-0 flex-col items-center pb-[5px] pt-[8px] text-[#333]">
            <ChevronUp size={12} strokeWidth={3} />
            <span className="mb-[17px] w-full flex-1 bg-[#cdcdcd]" />
            <ChevronDown size={12} strokeWidth={3} />
          </div>
          <SidePanel />
        </div>
      </div>
      <StatusBar />
    </div>
  );
}
